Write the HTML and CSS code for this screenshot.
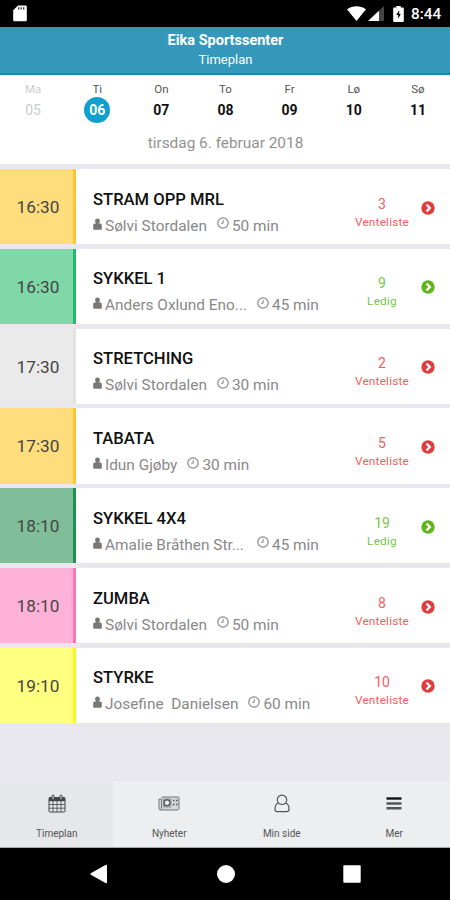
FILE: index.html
```html
<!DOCTYPE html>
<html lang="no">
<head>
    <meta charset="UTF-8">
    <meta name="viewport" content="width=device-width, initial-scale=1.0">
    <title>Timeplan</title>
    <link rel="stylesheet" href="styles.css">
</head>
<body>
    <!-- Shared icons -->
    <svg class="sprite">
        <symbol id="person" viewBox="0 0 9 12">
            <path d="M4.5.5a2.400 2.400 0 0 1 2.400 2.500c0 1.200-.5 2.100-1.100 2.500H7.500q1.300 0 1.300 1.500v4q0 .7-.7.7H.9q-.7 0-.7-.7V7q0-1.500 1.300-1.500h1.700C2.600 5.100 2.100 4.200 2.100 3A2.400 2.400 0 0 1 4.500.5z"/>
        </symbol>
        <symbol id="clock" viewBox="0 0 12 12">
            <circle cx="6" cy="6" r="5.200" fill="none" stroke="currentColor" stroke-width="1.200"/>
            <path d="M6.200 3v3.300H4.200" fill="none" stroke="currentColor" stroke-width="1"/>
        </symbol>
        <symbol id="arrow" viewBox="0 0 14 14">
            <circle cx="7" cy="7" r="6.700"/>
            <path d="M5.500 3.600L8.900 7l-3.400 3.400" fill="none" stroke="#fff" stroke-width="2.200"/>
        </symbol>
    </svg>

    <div class="statusbar">
        <svg class="sdcard" width="14" height="17" viewBox="0 0 14 17">
            <path d="M5 0.500h7.500a1.300 1.300 0 0 1 1.300 1.300v13.200a1.300 1.300 0 0 1-1.300 1.300H1.500A1.300 1.300 0 0 1 .2 15V5.300z" fill="#fff"/>
            <path d="M5.700 2.200v2.300M8.200 2.200v2.300M10.700 2.200v2.300" stroke="#333" stroke-width="1.300"/>
        </svg>
        <svg width="19" height="15" viewBox="0 0 19 15">
            <path d="M0 3.300C5.500-.9 13.500-.9 19 3.300L9.500 15z" fill="#fff"/>
        </svg>
        <svg class="signal" width="16" height="15" viewBox="0 0 16 15">
            <path d="M16 0v15H0z" fill="#444"/>
            <path d="M11 4.700V15H0z" fill="#fff"/>
        </svg>
        <svg class="battery" width="11" height="16" viewBox="0 0 11 16">
            <path d="M3.300 0h4.400v1.500H10q.8 0 .8.800v12.900q0 .8-.8.800H1q-.8 0-.8-.8V2.300q0-.8.8-.8h2.300z" fill="#fff"/>
            <path d="M6.200 4.300L3.200 9h2v3.800L7.800 8H6.200z" fill="#000"/>
        </svg>
        <span class="time">8:44</span>
    </div>

    <header>
        <h1>Eika Sportssenter</h1>
        <p>Timeplan</p>
    </header>

    <section class="calendar">
        <div class="week">
            <div class="day past"><span>Ma</span><b>05</b></div>
            <div class="day active"><span>Ti</span><b>06</b></div>
            <div class="day"><span>On</span><b>07</b></div>
            <div class="day"><span>To</span><b>08</b></div>
            <div class="day"><span>Fr</span><b>09</b></div>
            <div class="day"><span>Lø</span><b>10</b></div>
            <div class="day"><span>Sø</span><b>11</b></div>
        </div>
        <p class="date">tirsdag 6. februar 2018</p>
    </section>

    <main>
        <div class="class-row yellow">
            <div class="start">16:30</div>
            <div class="info">
                <h2>STRAM OPP MRL</h2>
                <div class="meta">
                    <svg class="person"><use href="#person"/></svg><span class="name">Sølvi Stordalen</span>
                    <svg class="clock"><use href="#clock"/></svg><span>50 min</span>
                </div>
            </div>
            <div class="spots full"><b>3</b><span>Venteliste</span></div>
            <svg class="arrow full"><use href="#arrow"/></svg>
        </div>
        <div class="class-row green">
            <div class="start">16:30</div>
            <div class="info">
                <h2>SYKKEL 1</h2>
                <div class="meta">
                    <svg class="person"><use href="#person"/></svg><span class="name cut">Anders Oxlund Eno...</span>
                    <svg class="clock"><use href="#clock"/></svg><span>45 min</span>
                </div>
            </div>
            <div class="spots free"><b>9</b><span>Ledig</span></div>
            <svg class="arrow free"><use href="#arrow"/></svg>
        </div>
        <div class="class-row grey">
            <div class="start">17:30</div>
            <div class="info">
                <h2>STRETCHING</h2>
                <div class="meta">
                    <svg class="person"><use href="#person"/></svg><span class="name">Sølvi Stordalen</span>
                    <svg class="clock"><use href="#clock"/></svg><span>30 min</span>
                </div>
            </div>
            <div class="spots full"><b>2</b><span>Venteliste</span></div>
            <svg class="arrow full"><use href="#arrow"/></svg>
        </div>
        <div class="class-row yellow">
            <div class="start">17:30</div>
            <div class="info">
                <h2>TABATA</h2>
                <div class="meta">
                    <svg class="person"><use href="#person"/></svg><span class="name">Idun Gjøby</span>
                    <svg class="clock"><use href="#clock"/></svg><span>30 min</span>
                </div>
            </div>
            <div class="spots full"><b>5</b><span>Venteliste</span></div>
            <svg class="arrow full"><use href="#arrow"/></svg>
        </div>
        <div class="class-row darkgreen">
            <div class="start">18:10</div>
            <div class="info">
                <h2>SYKKEL 4X4</h2>
                <div class="meta">
                    <svg class="person"><use href="#person"/></svg><span class="name cut">Amalie Bråthen Str...</span>
                    <svg class="clock"><use href="#clock"/></svg><span>45 min</span>
                </div>
            </div>
            <div class="spots free"><b>19</b><span>Ledig</span></div>
            <svg class="arrow free"><use href="#arrow"/></svg>
        </div>
        <div class="class-row pink">
            <div class="start">18:10</div>
            <div class="info">
                <h2>ZUMBA</h2>
                <div class="meta">
                    <svg class="person"><use href="#person"/></svg><span class="name">Sølvi Stordalen</span>
                    <svg class="clock"><use href="#clock"/></svg><span>50 min</span>
                </div>
            </div>
            <div class="spots full"><b>8</b><span>Venteliste</span></div>
            <svg class="arrow full"><use href="#arrow"/></svg>
        </div>
        <div class="class-row lemon">
            <div class="start">19:10</div>
            <div class="info">
                <h2>STYRKE</h2>
                <div class="meta">
                    <svg class="person"><use href="#person"/></svg><span class="name">Josefine  Danielsen</span>
                    <svg class="clock"><use href="#clock"/></svg><span>60 min</span>
                </div>
            </div>
            <div class="spots full"><b>10</b><span>Venteliste</span></div>
            <svg class="arrow full"><use href="#arrow"/></svg>
        </div>
    </main>

    <nav class="tabs">
        <div class="tab selected">
            <svg width="18" height="19" viewBox="0 0 18 19" fill="none" stroke="#444">
                <rect x="1" y="3.500" width="16" height="14.500" rx="1"/>
                <path d="M1 5.500h16" stroke-width="3.500"/>
                <path d="M1 10.500h16M1 14.200h16M5 7v11M9 7v11M13 7v11" stroke-width=".8"/>
                <rect x="4" y="1" width="2" height="4.500" rx="1" fill="#e8e9eb"/>
                <rect x="12" y="1" width="2" height="4.500" rx="1" fill="#e8e9eb"/>
            </svg>
            <span>Timeplan</span>
        </div>
        <div class="tab">
            <svg width="22" height="19" viewBox="0 0 22 19" fill="none" stroke="#777">
                <path d="M3.500 3H20q1 0 1 1v10.500q0 1.500-1.500 1.500H2.500Q1 16 1 14.500V5h2.500v9.500q0 1-1 1.300" fill="#d5d6d8"/>
                <circle cx="9" cy="8.700" r="3" fill="#eee" stroke="#555" stroke-width="1.500"/>
                <path d="M5.500 5v8H13V5z" stroke-width=".7"/>
                <path d="M15 6.500h1.500M18 6.500h1.500M15 10.500h1.500M18 10.500h1.500" stroke="#555" stroke-width="1.500"/>
            </svg>
            <span>Nyheter</span>
        </div>
        <div class="tab">
            <svg width="16" height="19" viewBox="0 0 16 19" fill="none" stroke="#555" stroke-width="1.200">
                <circle cx="8" cy="5.800" r="4.700"/>
                <path d="M4.500 9C1.800 9.700 1 12 1 15q0 2.700 2.200 2.700h9.600Q15 17.700 15 15c0-3-.8-5.300-3.500-6"/>
            </svg>
            <span>Min side</span>
        </div>
        <div class="tab">
            <svg width="16" height="19" viewBox="0 0 16 19">
                <path d="M.5 4.500h15" stroke="#111" stroke-width="2.400"/>
                <path d="M.5 9.500h15M.5 14.200h15" stroke="#555" stroke-width="2.400"/>
            </svg>
            <span>Mer</span>
        </div>
    </nav>

    <div class="softkeys">
        <svg width="18" height="20" viewBox="0 0 18 20"><path d="M.8 9.200L15.500 1q1.500-.6 1.500.8v16.400q0 1.400-1.500.8L.8 10.800q-1-.8 0-1.600z"/></svg>
        <svg width="18" height="20" viewBox="0 0 18 20"><circle cx="9" cy="10" r="9"/></svg>
        <svg width="18" height="20" viewBox="0 0 18 20"><rect x=".3" y="1.300" width="17.400" height="17.400" rx="1"/></svg>
    </div>
</body>
</html>
```
FILE: styles.css
```css
* {
    box-sizing: border-box;
}

body {
    display: flex;
    flex-direction: column;
    height: 900px;
    margin: 0;
    font-family: Roboto, "Liberation Sans", sans-serif;
    background-color: #e8e8ee;
    color: #111;
    overflow: hidden;
}

h1, h2, p {
    margin: 0;
}

svg {
    display: block;
    flex: none;
}

.sprite {
    width: 0;
    height: 0;
    position: absolute;
}

.statusbar {
    display: flex;
    align-items: center;
    height: 27px;
    padding: 0 8px 0 13px;
    background-color: #000;
    color: #fff;
}

.sdcard {
    margin-right: auto;
}

.signal {
    margin-left: 2px;
}

.battery {
    margin: 0 7px 0 9px;
}

.time {
    font-size: 15.3px;
    font-weight: 500;
    width: 31px;
    padding-top: 1px;
}

header {
    height: 48px;
    padding: 5px 0 0 1px;
    background-color: #3598ba;
    border-bottom: 2px solid #1589ae;
    color: #fff;
    text-align: center;
}

h1 {
    font-size: 14.5px;
    line-height: 18px;
    font-weight: 700;
}

header p {
    font-size: 13px;
    line-height: 19px;
}

.calendar {
    height: 89px;
    padding: 6px 0 0 1px;
    background-color: #fff;
    text-align: center;
}

.week {
    display: grid;
    grid-template-columns: repeat(7, 1fr);
}

.day {
    display: flex;
    flex-direction: column;
    align-items: center;
}

.day span {
    font-size: 11.5px;
    line-height: 16px;
    color: #555;
}

.day b {
    width: 26px;
    height: 26px;
    border-radius: 50%;
    font-size: 14px;
    line-height: 26px;
    font-weight: 700;
}

.day.past span, .day.past b {
    color: #ccc;
    font-weight: 400;
}

.day.active b {
    background-color: #0f9fd0;
    color: #fff;
}

.date {
    margin-top: 10px;
    font-size: 15.4px;
    line-height: 20px;
    color: #929292;
}

main {
    flex: 1;
    display: flex;
    flex-direction: column;
    gap: 4.5px;
    padding-top: 5px;
}

.class-row {
    display: flex;
    align-items: center;
    height: 75.3px;
    padding-right: 15px;
    background-color: #fff;
}

.start {
    width: 76px;
    height: 100%;
    border-right: 3px solid;
    font-size: 17.2px;
    line-height: 77px;
    text-align: center;
    padding-left: 3px;
    color: #444;
}

.yellow .start { background-color: #ffdc7c; border-color: #fdc52b; }
.green .start { background-color: #80d8a8; border-color: #22b96c; }
.grey .start { background-color: #eaeaea; border-color: #e2e2e2; }
.darkgreen .start { background-color: #80be9a; border-color: #1c9250; }
.pink .start { background-color: #ffb2d8; border-color: #fc74b5; }
.lemon .start { background-color: #ffff80; border-color: #fbf520; }

.info {
    flex: 1;
    padding: 12px 0 0 17px;
}

h2 {
    font-size: 16.6px;
    line-height: 20px;
    font-weight: 500;
}

.meta {
    display: flex;
    align-items: center;
    margin-top: 6px;
    font-size: 15.4px;
    line-height: 20px;
    color: #888;
    white-space: pre;
}

.name {
    margin-right: 10px;
}

.name.cut {
    width: 142px;
}

.person {
    width: 9px;
    height: 12px;
    margin: 0 3px 4px 0;
    fill: #777;
}

.clock {
    width: 12px;
    height: 12px;
    margin: 0 3px 5px 0;
}

.spots {
    display: flex;
    flex-direction: column;
    align-items: center;
    width: 66px;
    padding-top: 12px;
    margin-right: 6px;
}

.spots b {
    font-size: 14px;
    line-height: 18px;
    font-weight: 400;
}

.spots span {
    font-size: 11.8px;
    line-height: 18px;
    letter-spacing: 0.2px;
}

.full {
    color: #f26060;
}

.free {
    color: #78c843;
}

.arrow {
    width: 14px;
    height: 14px;
    margin-top: 2px;
    fill: #e03c3c;
}

.arrow.free {
    fill: #5fb51c;
}

.tabs {
    display: grid;
    grid-template-columns: repeat(4, 1fr);
    height: 67px;
    background-color: #edeef0;
    border-bottom: 1px solid #aaa;
}

.tab {
    display: flex;
    flex-direction: column;
    align-items: center;
    padding: 13px 0 0 1px;
    font-size: 10px;
    color: #555;
}

.tab span {
    margin-top: 14px;
    line-height: 14px;
}

.selected {
    background-color: #e6e7e9;
}

.softkeys {
    display: flex;
    justify-content: space-between;
    align-items: center;
    height: 52px;
    padding: 0 89px 0 90px;
    background-color: #000;
    fill: #fff;
}
```
